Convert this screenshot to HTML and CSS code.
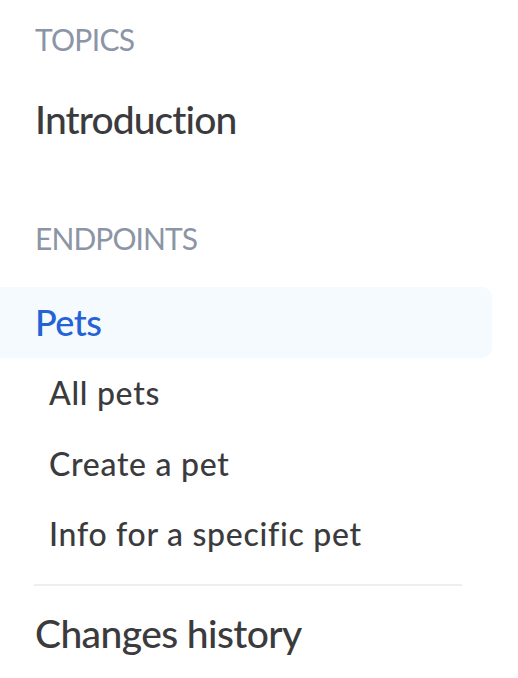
FILE: index.html
```html
<!DOCTYPE html>
<html lang="en">
<head>
  <meta charset="UTF-8">
  <meta name="viewport" content="width=device-width, initial-scale=1.0">
  <title>Sidebar</title>
  <link rel="stylesheet" href="styles.css">
</head>
<body>
  <nav class="sidebar">
    <div class="label label-topics">TOPICS</div>
    <a class="item item-intro" href="#">Introduction</a>

    <div class="label label-endpoints">ENDPOINTS</div>
    <a class="item group active" href="#">Pets</a>
    <a class="item sub" href="#">All pets</a>
    <a class="item sub" href="#">Create a pet</a>
    <a class="item sub" href="#">Info for a specific pet</a>

    <div class="divider"></div>
    <a class="item item-changes" href="#">Changes history</a>
  </nav>
</body>
</html>
```

FILE: styles.css
```css
body {
  margin: 0;
  font-family: Lato, "Open Sans", sans-serif;
  font-variant-ligatures: none;
  background: #fff;
  color: #3b3b3e;
}
.sidebar {
  width: 492px;
  padding-top: 19px;
}
.label {
  padding-left: 35px;
  font-size: 30px;
  line-height: 40px;
  color: #8b95a5;
  letter-spacing: -0.7px;
}
.label-endpoints {
  margin-top: 63px;
  letter-spacing: -0.9px;
}
.item {
  display: block;
  padding-left: 35px;
  font-size: 39px;
  font-weight: 500;
  line-height: 71px;
  color: #3b3b3e;
  text-decoration: none;
}
.item-intro {
  letter-spacing: -0.9px;
  margin-top: 25px;
}
.item-changes {
  letter-spacing: -0.6px;
}
.group {
  margin-top: 29px;
  font-size: 36px;
  line-height: 71px;
  height: 71px;
  box-sizing: border-box;
  padding-bottom: 3px;
  letter-spacing: -0.5px;
}
.active {
  background: #f5faff;
  color: #2462d6;
  border-radius: 0 10px 10px 0;
}
.sub {
  padding-left: 49px;
  font-size: 32px;
  line-height: 70.5px;
  letter-spacing: 0.7px;
}
.divider {
  height: 2px;
  margin: 14px 30px 12px 34px;
  background: #eeeeee;
}
```
